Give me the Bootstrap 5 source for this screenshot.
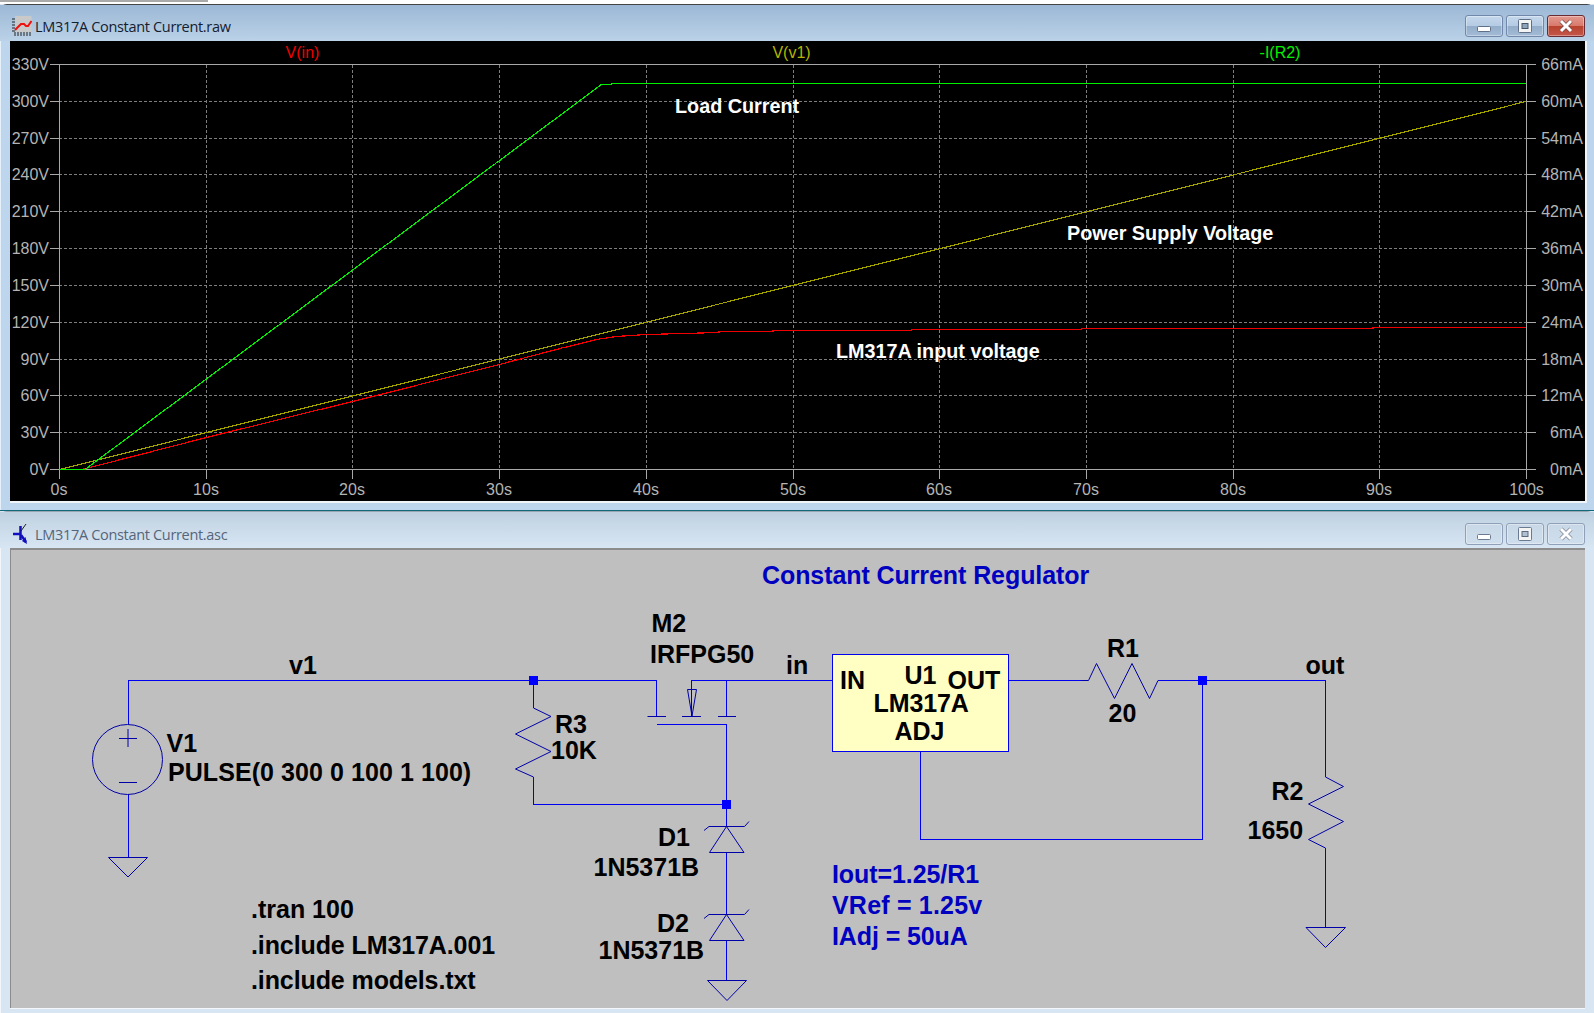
<!DOCTYPE html>
<html lang="en">
<head>
<meta charset="utf-8">
<title>LTspice</title>
<link href="https://cdn.jsdelivr.net/npm/bootstrap@5.3.0/dist/css/bootstrap.min.css" rel="stylesheet">
<style>
html,body{margin:0;height:1013px;overflow:hidden;background:#d8e6f4}
.topstrip{height:4px;background:#fff;position:relative}
.topstrip-gray{width:208px;height:2px;background:#aaa}
.wnd{border-radius:7px 7px 0 0}
.wnd-a{height:507px;background:#bdd6ee;border-top:1px solid #444;border-bottom:1px solid #14687c;box-shadow:inset 1px 0 0 #e6f0f8}
.wnd-b{height:502px;background:#d8e6f4;border-top:1px solid #9aa6b2;box-shadow:inset 1px 0 0 #f2f6fa}
.ttl{height:36px;padding:6px 9px 0 12px}
.ttl-a{background:linear-gradient(#9cb8d6,#bbd2e8)}
.ttl-b{background:linear-gradient(#bfd1e1,#d8e6f3);padding-top:8px}
.ttl-text{font:14.5px "Open Sans","Noto Sans",sans-serif;margin-left:3px;letter-spacing:-.32px;line-height:1;padding-top:2px}
.ttl-a .ttl-text{color:#14202e}
.ttl-b .ttl-text{color:#56657a}
.winbtn{width:38px;height:22px;padding:0;border-radius:3px;display:flex;align-items:center;justify-content:center;border:1px solid #7288aa;box-shadow:inset 0 0 0 1px rgba(255,255,255,.35)}
.winbtn-a{background:linear-gradient(#c5d8ec 0,#b4cbe3 50%,#93adca 52%,#a3bbd6 100%)}
.winbtn-b{background:linear-gradient(#c9d8e7,#cfdeec);border-color:#8fa0b8}
.winbtn-x{background:linear-gradient(#e39a90 0,#d87a6c 48%,#b8432e 52%,#c4574a 100%);border-color:#6a2c34}
.btnrow{margin-left:auto;gap:3px}
.minglyph{margin-top:6px}
.plotbox{margin:0 8px 0 10px;width:1575px;height:460px;background:#000;box-shadow:1px 1px 0 1px #f0f5fa}
.canvasbox{margin:2px 8px 0 10px;width:1575px;height:458px;background:#bfbfbf;box-shadow:0 -2px 0 #8c8c8c,inset 1px 0 0 #8c8c8c,0 1px 0 #f4f8fc}
svg{display:block}
.axis{font:16px "Liberation Sans",sans-serif;fill:#b4b4b4}
.sol{stroke:#a8a8a8;fill:none;shape-rendering:crispEdges}
.dash{stroke:#7e7e7e;fill:none;stroke-dasharray:3 2;shape-rendering:crispEdges}
.trc{fill:none;shape-rendering:crispEdges;stroke-width:1.2}
.tag{font:16px "Liberation Sans",sans-serif}
.note{font:bold 19.8px "Liberation Sans",sans-serif;fill:#fff}
.wire{stroke:#0000f0;fill:none;shape-rendering:crispEdges}
.sym{stroke:#0000a8;fill:none;stroke-width:1}
.sch{font:bold 25px "Liberation Sans",sans-serif;fill:#000}
.schb{font:bold 25px "Liberation Sans",sans-serif;fill:#0000c0}
.tight{letter-spacing:-.1px}
.tighter{letter-spacing:-.08px}
.loose{letter-spacing:.2px}
.wider{letter-spacing:.07px}
</style>
</head>
<body>
<div class="topstrip"><div class="topstrip-gray"></div></div>

<section class="wnd wnd-a d-flex flex-column">
  <div class="ttl ttl-a d-flex align-items-center">
    <svg width="20" height="20" viewBox="0 0 20 20" aria-hidden="true"><rect x="3" y="0" width="16.500" height="16.500" fill="#c9c9c9"/><path d="M0 3h3M0 6h3M0 9h3M0 12h3M0 15h3M3 16v4M6 16v4M9 16v4M12 16v4M15 16v4M18 16v4" stroke="#222" fill="none"/><path d="M3 14 L7 10 L9 8 L12 8 L14 10 L16 10 L19.500 5" stroke="#f01010" stroke-width="2" fill="none"/></svg>
    <span class="ttl-text">LM317A Constant Current.raw</span>
    <div class="btnrow d-flex">
      <button class="winbtn winbtn-a" type="button" aria-label="Minimise"><svg class="minglyph" width="14" height="6" viewBox="0 0 14 6"><rect x=".5" y=".5" width="13" height="5" rx="1" fill="#fff" stroke="#5f6f85"/></svg></button>
      <button class="winbtn winbtn-a" type="button" aria-label="Maximise"><svg width="14" height="14" viewBox="0 0 14 14"><rect x=".5" y=".5" width="13" height="13" rx="1" fill="#f4f4f4" stroke="#5f6f85"/><rect x="4" y="4.500" width="6" height="5" fill="#8fa3ba" stroke="#44566c"/></svg></button>
      <button class="winbtn winbtn-x" type="button" aria-label="Close"><svg width="16" height="14" viewBox="0 0 16 14"><path d="M3 2 L13 12 M13 2 L3 12" stroke="#7a4a4a" stroke-width="4.500" fill="none"/><path d="M3 2 L13 12 M13 2 L3 12" stroke="#fff" stroke-width="3" fill="none"/></svg></button>
    </div>
  </div>
  <div class="plotbox">
    <svg width="1575" height="460" viewBox="10 41 1575 460">
      <path class="dash" d="M59 101.500H1527M59 138.500H1527M59 174.500H1527M59 211.500H1527M59 248.500H1527M59 285.500H1527M59 322.500H1527M59 359.500H1527M59 395.500H1527M59 432.500H1527"/>
      <path class="dash" d="M206.500 65V469M352.500 65V469M499.500 65V469M646.500 65V469M793.500 65V469M939.500 65V469M1086.500 65V469M1233.500 65V469M1379.500 65V469"/>
      <path class="sol" d="M50 64.500H1536M50 469.500H1536M59.500 64V479M1526.500 64V479"/>
      <path class="sol" d="M50 101.500H59M50 138.500H59M50 174.500H59M50 211.500H59M50 248.500H59M50 285.500H59M50 322.500H59M50 359.500H59M50 395.500H59M50 432.500H59"/>
      <path class="sol" d="M1527 101.500H1536M1527 138.500H1536M1527 174.500H1536M1527 211.500H1536M1527 248.500H1536M1527 285.500H1536M1527 322.500H1536M1527 359.500H1536M1527 395.500H1536M1527 432.500H1536"/>
      <path class="sol" d="M206.500 469V479M352.500 469V479M499.500 469V479M646.500 469V479M793.500 469V479M939.500 469V479M1086.500 469V479M1233.500 469V479M1379.500 469V479"/>

      <polyline class="trc" stroke="#f00000" points="82,469.500 206.500,437.500 352.500,401.500 499.500,364.500 560,348.500 596.500,339.500 616.500,336.500 646.500,334.500 719,332.500 719,331.500 773,331.500 773,330.500 911.500,330.500 911.500,329.500 1081.500,329.500 1081.500,328.500 1373,328.500 1373,327.500 1526,327.500"/>
      <polyline class="trc" stroke="#a0a000" points="59.500,469.500 1526,101.500"/>
      <polyline class="trc" stroke="#00f000" points="59.500,469.500 85,469.500 601.500,84.500 611.500,84.500 611.500,83.500 1526,83.500"/>

      <g class="axis" text-anchor="end">
        <text x="49" y="69.500">330V</text><text x="49" y="106.500">300V</text><text x="49" y="143.500">270V</text><text x="49" y="179.500">240V</text><text x="49" y="216.500">210V</text><text x="49" y="253.500">180V</text><text x="49" y="290.500">150V</text><text x="49" y="327.500">120V</text><text x="49" y="364.500">90V</text><text x="49" y="400.500">60V</text><text x="49" y="437.500">30V</text><text x="49" y="474.500">0V</text>
        <text x="1583" y="69.500">66mA</text><text x="1583" y="106.500">60mA</text><text x="1583" y="143.500">54mA</text><text x="1583" y="179.500">48mA</text><text x="1583" y="216.500">42mA</text><text x="1583" y="253.500">36mA</text><text x="1583" y="290.500">30mA</text><text x="1583" y="327.500">24mA</text><text x="1583" y="364.500">18mA</text><text x="1583" y="400.500">12mA</text><text x="1583" y="437.500">6mA</text><text x="1583" y="474.500">0mA</text>
      </g>
      <g class="axis" text-anchor="middle">
        <text x="59" y="494.500">0s</text><text x="206" y="494.500">10s</text><text x="352" y="494.500">20s</text><text x="499" y="494.500">30s</text><text x="646" y="494.500">40s</text><text x="793" y="494.500">50s</text><text x="939" y="494.500">60s</text><text x="1086" y="494.500">70s</text><text x="1233" y="494.500">80s</text><text x="1379" y="494.500">90s</text><text x="1526.500" y="494.500">100s</text>
      </g>
      <g class="tag" text-anchor="middle">
        <text x="302.500" y="58" fill="#f00000">V(in)</text>
        <text x="791.500" y="58" fill="#b4b400">V(v1)</text>
        <text x="1280" y="58" fill="#00f000">-I(R2)</text>
      </g>
      <text class="note" x="675" y="113">Load Current</text>
      <text class="note" x="1067" y="240">Power Supply Voltage</text>
      <text class="note" x="836" y="358">LM317A input voltage</text>
    </svg>
  </div>
</section>

<section class="wnd wnd-b d-flex flex-column">
  <div class="ttl ttl-b d-flex align-items-center">
    <svg width="20" height="22" viewBox="0 0 20 22" aria-hidden="true"><path d="M8.500 3 V17" stroke="#1010b0" stroke-width="2.500" fill="none"/><path d="M1 11H8" stroke="#1010c0" stroke-width="2.500" fill="none"/><path d="M9 8 L14 1" stroke="#222" stroke-width="1" fill="none"/><path d="M9 12 L14 19" stroke="#1010c0" stroke-width="2.500" fill="none"/><path d="M15 21 L10 18 L13.500 14z" fill="#1010c0"/></svg>
    <span class="ttl-text">LM317A Constant Current.asc</span>
    <div class="btnrow d-flex">
      <button class="winbtn winbtn-b" type="button" aria-label="Minimise"><svg class="minglyph" width="14" height="6" viewBox="0 0 14 6"><rect x=".5" y=".5" width="13" height="5" rx="1" fill="#fff" stroke="#6a7a90"/></svg></button>
      <button class="winbtn winbtn-b" type="button" aria-label="Maximise"><svg width="14" height="14" viewBox="0 0 14 14"><rect x=".5" y=".5" width="13" height="13" rx="1" fill="#f4f4f4" stroke="#6a7a90"/><rect x="4" y="4.500" width="6" height="5" fill="#b0c0d2" stroke="#5a6b80"/></svg></button>
      <button class="winbtn winbtn-b" type="button" aria-label="Close"><svg width="16" height="14" viewBox="0 0 16 14"><path d="M3 2 L13 12 M13 2 L3 12" stroke="#7d8798" stroke-width="4.500" fill="none"/><path d="M3 2 L13 12 M13 2 L3 12" stroke="#fff" stroke-width="3" fill="none"/></svg></button>
    </div>
  </div>
  <div class="canvasbox">
    <svg width="1575" height="458" viewBox="10 550 1575 458">
      <rect x="832.500" y="654.500" width="176" height="97" fill="#ffffc4" stroke="#0000f0" shape-rendering="crispEdges"/>
      <!-- wires -->
      <path class="wire" d="M128.500 724V680.500H656.500V716.500M128.500 794V857.500"/>
      <path class="wire" d="M533.500 680.500V708M533.500 777V804.500H726.500"/>
      <path class="wire" d="M691.500 689V680.500H832.500M726.500 680.500V716M656.500 724.500H726.500V826"/>
      <path class="wire" d="M1008.500 680.500H1081M1158 680.500H1325.500V777M1325.500 848V927.500"/>
      <path class="wire" d="M920.500 751V839.500H1202.500V680.500"/>
      <path class="wire" d="M726.500 853V914M726.500 941V980.500"/>
      <!-- junctions -->
      <rect x="529" y="676" width="9" height="9" fill="#0000ff"/>
      <rect x="722" y="800" width="9" height="9" fill="#0000ff"/>
      <rect x="1198" y="676" width="9" height="9" fill="#0000ff"/>
      <!-- symbols -->
      <circle class="sym" cx="127.500" cy="759.500" r="35"/>
      <path class="sym" d="M119 738.500H137M128 729V747M119 782.500H137"/>
      <path class="sym" d="M108.500 857.500H147.500L128 877Z"/>
      <path class="sym" d="M707.500 980.500H746.500L727 1000.500Z"/>
      <path class="sym" d="M1306 927.500H1345.500L1325.500 947.500Z"/>
      <path class="sym" d="M533.500 708L551 716.500L515.500 734L551 751.500L515.500 769L533.500 777"/>
      <path class="sym" d="M1081 680.500H1088.500L1096.500 663.500L1114.500 698.500L1132 663.500L1149.500 698.500L1158 680.500"/>
      <path class="sym" d="M1325.500 777L1343.500 786.500L1308.500 804L1343.500 821.500L1308.500 839.500L1325.500 848"/>
      <path class="sym" d="M647.500 716.500H666M682 716.500H701M718 716.500H736"/>
      <path class="sym" d="M687.500 689.500H696.500L692 716ZM691.500 689.500V716"/>
      <path class="sym" d="M704 830.500L709 826.500H744.500L749 821.500M726.500 826.500L709.500 852.500H744L726.500 826.500"/>
      <path class="sym" d="M704 918.500L709 914.500H744.500L749 909.500M726.500 914.500L709.500 940.500H744L726.500 914.500"/>
      <!-- text -->
      <text class="schb tighter" x="762" y="584">Constant Current Regulator</text>
      <text class="sch" x="289" y="673.500">v1</text>
      <text class="sch" x="166.500" y="752">V1</text>
      <text class="sch wider" x="168" y="781">PULSE(0 300 0 100 1 100)</text>
      <text class="sch" x="251" y="917.500">.tran 100</text>
      <text class="sch tight" x="251" y="953.500">.include LM317A.001</text>
      <text class="sch tight" x="251" y="988.500">.include models.txt</text>
      <text class="sch" x="555" y="733">R3</text>
      <text class="sch" x="551" y="758.500">10K</text>
      <text class="sch" x="651.500" y="632">M2</text>
      <text class="sch" x="650" y="662.500">IRFPG50</text>
      <text class="sch" x="786" y="673.500">in</text>
      <text class="sch" x="840" y="688.500">IN</text>
      <text class="sch" x="904.500" y="683.500">U1</text>
      <text class="sch" x="947.500" y="688.500">OUT</text>
      <text class="sch tight" x="873.500" y="712">LM317A</text>
      <text class="sch" x="894.500" y="739.500">ADJ</text>
      <text class="sch" x="658" y="845.500">D1</text>
      <text class="sch" x="593.500" y="875.500">1N5371B</text>
      <text class="sch" x="657" y="932">D2</text>
      <text class="sch" x="598.500" y="958.500">1N5371B</text>
      <text class="schb tighter" x="832" y="883">Iout=1.25/R1</text>
      <text class="schb loose" x="832" y="913.500">VRef = 1.25v</text>
      <text class="schb tight" x="832" y="944.500">IAdj = 50uA</text>
      <text class="sch" x="1107" y="657">R1</text>
      <text class="sch" x="1108.500" y="721.500">20</text>
      <text class="sch" x="1305.500" y="673.500">out</text>
      <text class="sch" x="1271.500" y="800">R2</text>
      <text class="sch" x="1247.500" y="838.500">1650</text>
    </svg>
  </div>
</section>
<script src="https://cdn.jsdelivr.net/npm/bootstrap@5.3.0/dist/js/bootstrap.bundle.min.js"></script>
</body>
</html>
